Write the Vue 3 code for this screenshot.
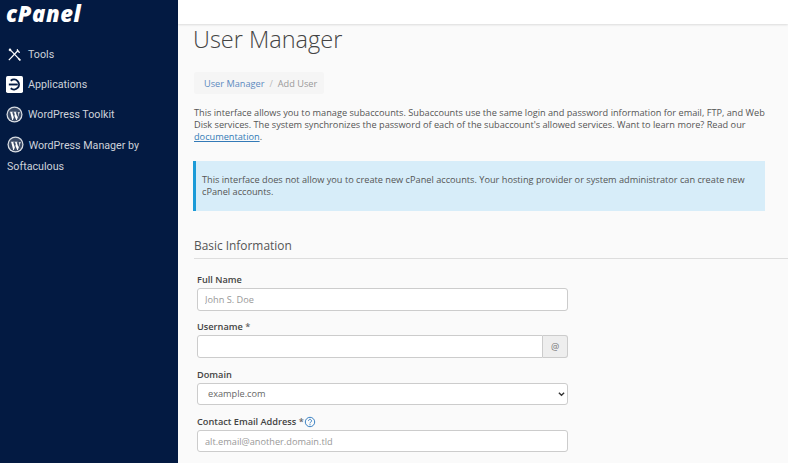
<script setup>
const navItems = [
  { label: 'Tools', icon: 'tools' },
  { label: 'Applications', icon: 'apps' },
  { label: 'WordPress Toolkit', icon: 'wp' },
]
</script>

<template>
  <div class="page">
    <aside class="sidebar">
      <div class="logo">cPanel</div>
      <nav class="nav">
        <a v-for="item in navItems" :key="item.label" class="nav-item">
          <svg v-if="item.icon === 'tools'" class="nav-icon" viewBox="0 0 18 18" fill="none" stroke="#fff">
            <path d="M3 15 13 4.500" stroke-width="1.300" />
            <path d="M12 3.500a2.600 2.600 0 0 0 2.600 3.200l-1.400-.8-.6-.9z" fill="#fff" stroke-width="1" />
            <path d="M3.500 3 15 15" stroke-width="1.300" />
            <path d="M2.600 4.200 4.400 2.500l1.500 1.800-1.500 1.400z" fill="#fff" stroke="none" />
            <path d="M13.400 12.400 15.800 14.800 14.600 16 12.300 13.600z" fill="#fff" stroke="none" />
          </svg>
          <svg v-else-if="item.icon === 'apps'" class="nav-icon" viewBox="0 0 18 18">
            <rect width="18" height="18" rx="1.800" fill="#fff" />
            <path d="M5 5A5.300 5.300 0 1 1 5 13" fill="none" stroke="#031a42" stroke-width="2" />
            <path d="M3 9h9.500" stroke="#031a42" stroke-width="2" />
          </svg>
          <svg v-else class="nav-icon" viewBox="0 0 18 18">
            <circle cx="9" cy="9" r="8.500" fill="#d9dde3" />
            <circle cx="9" cy="9" r="7.200" fill="#3a4a66" />
            <path d="M4 6h3.400v.5l-.9.2L8.300 12l1-2.800-.7-2.500-.8-.2V6h3.400v.5l-.9.2 1.800 5.300.9-3c.3-1-.2-1.800-.8-2.500h2.600v.5l-.5.2-2.800 7.600h-.7L8.900 10.300 7.300 14.800h-.7L4.500 6.700 4 6.500z" fill="#fff" />
          </svg>
          <span>{{ item.label }}</span>
        </a>
        <a class="nav-item nav-item-wrap">
          <svg class="nav-icon inline-icon" viewBox="0 0 18 18">
            <circle cx="9" cy="9" r="8.500" fill="#d9dde3" />
            <circle cx="9" cy="9" r="7.200" fill="#3a4a66" />
            <path d="M4 6h3.400v.5l-.9.2L8.300 12l1-2.800-.7-2.500-.8-.2V6h3.400v.5l-.9.2 1.800 5.300.9-3c.3-1-.2-1.800-.8-2.500h2.600v.5l-.5.2-2.800 7.600h-.7L8.900 10.300 7.300 14.800h-.7L4.500 6.700 4 6.500z" fill="#fff" />
          </svg>
          WordPress Manager by Softaculous
        </a>
      </nav>
    </aside>

    <div class="main">
      <header class="topbar"></header>
      <section class="content">
        <h1 class="title">User Manager</h1>
        <div class="breadcrumb">
          <a class="crumb-link">User Manager</a>
          <span class="crumb-sep">/</span>
          <span>Add User</span>
        </div>
        <p class="intro">
          This interface allows you to manage subaccounts. Subaccounts use the same login and password information for email, FTP, and Web Disk services. The system synchronizes the password of each of the subaccount's allowed services. Want to learn more? Read our <a class="doc-link">documentation</a>.
        </p>
        <div class="callout">
          This interface does not allow you to create new cPanel accounts. Your hosting provider or system administrator can create new cPanel accounts.
        </div>
        <h2 class="section-title">Basic Information</h2>
        <form class="form">
          <div class="field">
            <label>Full Name</label>
            <input class="control" type="text" placeholder="John S. Doe" />
          </div>
          <div class="field">
            <label>Username <span class="req">*</span></label>
            <div class="input-group">
              <input class="control" type="text" />
              <span class="addon">@</span>
            </div>
          </div>
          <div class="field">
            <label>Domain</label>
            <div class="select-wrap">
              <select class="control select">
                <option>example.com</option>
              </select>
              <svg class="chevron" viewBox="0 0 8 6" fill="none">
                <path d="M1 1.500 4 4.500 7 1.500" stroke="#333" stroke-width="1.500" />
              </svg>
            </div>
          </div>
          <div class="field">
            <label>
              Contact Email Address <span class="req">*</span>
              <svg class="help" viewBox="0 0 12 12" fill="none">
                <circle cx="6" cy="6" r="4.700" stroke="#3b82c4" stroke-width="1" />
                <path d="M4.500 4.800a1.500 1.500 0 1 1 2.300 1.300c-.6.400-.8.600-.8 1.200" stroke="#3b82c4" stroke-width="1" />
                <circle cx="6" cy="8.700" r=".6" fill="#3b82c4" />
              </svg>
            </label>
            <input class="control" type="text" placeholder="alt.email@another.domain.tld" />
          </div>
        </form>
      </section>
    </div>
  </div>
</template>

<style>
html, body {
  margin: 0;
  height: 100%;
  overflow: hidden;
}
</style>

<style scoped>
.page {
  display: flex;
  width: 788px;
  height: 463px;
  overflow: hidden;
  font-family: "Open Sans", "Liberation Sans", sans-serif;
  color: #555;
}

.sidebar {
  width: 178px;
  flex-shrink: 0;
  background: #031a42;
  color: #cdd2da;
  font-family: Roboto, "Liberation Sans", sans-serif;
  font-size: 10.700px;
}

.logo {
  padding: 0 0 0 6px;
  height: 32px;
  box-sizing: border-box;
  font-family: "Open Sans", sans-serif;
  font-size: 22px;
  font-weight: 800;
  font-style: italic;
  letter-spacing: .6px;
  color: #fff;
  line-height: 26px;
}

.nav {
  padding-top: 7px;
}

.nav-item {
  display: flex;
  align-items: center;
  gap: 5px;
  height: 30.300px;
  padding-left: 6px;
}

.nav-icon {
  width: 17px;
  height: 17px;
  flex-shrink: 0;
}

.nav-item-wrap {
  display: block;
  height: auto;
  padding: 5px 20px 0 7px;
  line-height: 21px;
}

.inline-icon {
  vertical-align: -4px;
  margin-right: 2px;
}

.main {
  flex: 1;
  min-width: 0;
  display: flex;
  flex-direction: column;
  background: #fafafa;
}

.topbar {
  height: 24px;
  flex-shrink: 0;
  background: #fff;
  box-shadow: 0 1px 2px rgba(0, 0, 0, .12);
}

.content {
  padding: 0 0 0 16px;
}

.title {
  margin: 0 0 0 -1px;
  font-size: 23.500px;
  font-weight: 300;
  line-height: 30px;
  color: #444;
}

.breadcrumb {
  display: inline-flex;
  gap: 5px;
  margin-top: 18px;
  padding: 0 7px 0 10px;
  height: 22px;
  align-items: center;
  background: #f5f5f5;
  border-radius: 3px;
  font-size: 9.200px;
  color: #999;
}

.crumb-link {
  color: #5c8ac0;
}

.crumb-sep {
  color: #bbb;
}

.intro {
  margin: 13px 0 0;
  width: 575px;
  font-size: 9.200px;
  line-height: 12px;
  color: #555;
}

.doc-link {
  color: #337ab7;
  text-decoration: underline;
}

.callout {
  box-sizing: border-box;
  width: 572px;
  height: 50px;
  margin: 18px 0 0 -1px;
  padding: 13px 15px 0 6px;
  background: #d7edf9;
  border-left: 3px solid #1b9bd8;
  font-size: 9.200px;
  line-height: 12px;
  color: #555;
}

.section-title {
  margin: 26px 0 0;
  padding-bottom: 4px;
  font-size: 11.900px;
  font-weight: 400;
  line-height: 17px;
  color: #555;
  border-bottom: 1px solid #ddd;
}

.form {
  padding: 14px 0 0 3px;
  width: 371px;
}

.field {
  margin-bottom: 9.800px;
}

label {
  display: block;
  height: 15px;
  font-size: 9.200px;
  font-weight: 600;
  line-height: 14px;
  color: #444;
}

.req {
  color: #666;
}

.help {
  width: 12px;
  height: 12px;
  vertical-align: -3px;
}

.control {
  display: block;
  box-sizing: border-box;
  width: 100%;
  height: 22.500px;
  padding: 0 7px;
  background: #fff;
  border: 1px solid #ccc;
  border-radius: 3px;
  font-family: inherit;
  font-size: 9.200px;
  color: #666;
  outline: none;
}

.control::placeholder {
  color: #999;
  opacity: 1;
}

.select-wrap {
  position: relative;
}

.select {
  appearance: none;
  padding-left: 10px;
}

.chevron {
  position: absolute;
  top: 8px;
  right: 3px;
  width: 7px;
  height: 6px;
}

.input-group {
  display: flex;
}

.input-group .control {
  flex: 1;
  min-width: 0;
  border-radius: 3px 0 0 3px;
}

.addon {
  box-sizing: border-box;
  width: 25px;
  height: 22.500px;
  display: flex;
  align-items: center;
  justify-content: center;
  background: #eee;
  border: 1px solid #ccc;
  border-left: 0;
  border-radius: 0 3px 3px 0;
  font-size: 9.200px;
  color: #777;
}
</style>
